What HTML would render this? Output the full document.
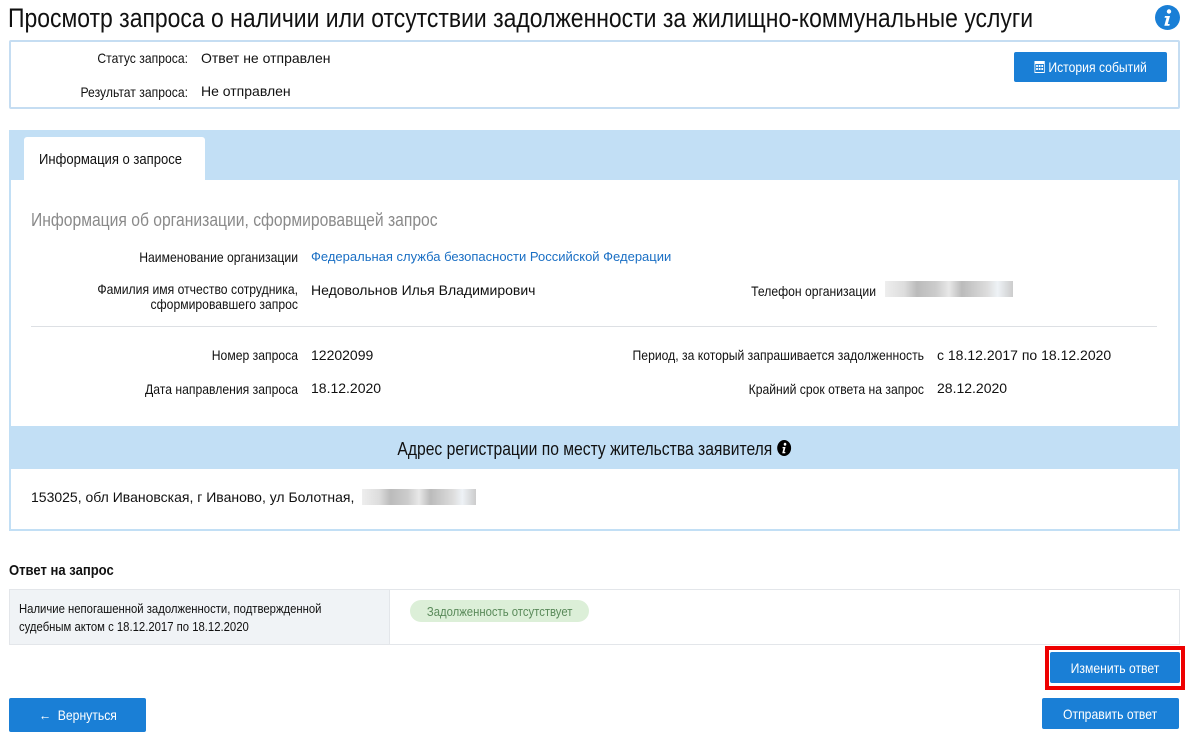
<!DOCTYPE html>
<html><head><meta charset="utf-8"><style>
*{margin:0;padding:0;box-sizing:border-box}
body{width:1191px;height:743px;background:#fff;position:relative;overflow:hidden;font-family:"Liberation Sans",sans-serif;color:#111}
.a{position:absolute;white-space:nowrap}
.nl{transform:scaleX(.87);transform-origin:left center}
.nr{transform:scaleX(.87);transform-origin:right center}
.nc{display:inline-block;transform:scaleX(.87);transform-origin:center}
.lbl{font-size:14px;text-align:right}
.val{font-size:14px}
.btn{position:absolute;background:#1a7fd6;color:#fff;font-size:14px;display:flex;align-items:center;justify-content:center;border-radius:2px}
.blur{position:absolute;height:16px;background:linear-gradient(90deg,#eee,#ddd 15%,#bbb 25%,#ccc 40%,#e8e8e8 50%,#bbb 60%,#ccc 70%,#ddd 80%,#eef2f6 88%,#ccc)}
</style></head><body>
<div class="a" style="left:8px;top:3px;font-size:27px;color:#111;transform:scaleX(.85);transform-origin:left center">Просмотр запроса о наличии или отсутствии задолженности за жилищно-коммунальные услуги</div>
<svg class="a" style="left:1155px;top:5px" width="25" height="25" viewBox="0 0 25 25"><circle cx="12.5" cy="12.5" r="12.5" fill="#1a7fd6"/><circle cx="14" cy="6.5" r="2.2" fill="#fff"/><path d="M10 11h5l-2.2 8h2l-.5 1.8H9.3l2.2-8H9.5z" fill="#fff"/></svg>

<div class="a" style="left:9px;top:40px;width:1171px;height:69px;border:2px solid #c5ddf2;border-radius:2px"></div>
<div class="a lbl nr" style="left:40px;width:148px;top:50px">Статус запроса:</div>
<div class="a val" style="left:201px;top:50px">Ответ не отправлен</div>
<div class="a lbl nr" style="left:40px;width:148px;top:84px">Результат запроса:</div>
<div class="a val" style="left:201px;top:83px">Не отправлен</div>
<div class="btn" style="left:1014px;top:52px;width:153px;height:30px"><span class="nc" style="white-space:nowrap"><svg width="12" height="13" viewBox="0 0 12 13" style="margin-right:4px;vertical-align:-1px"><rect x="0" y="1" width="12" height="12" fill="#fff"/><rect x="1" y="4" width="10" height="8" fill="#1a7fd6"/><g fill="#fff"><rect x="2" y="5" width="2" height="2"/><rect x="5" y="5" width="2" height="2"/><rect x="8" y="5" width="2" height="2"/><rect x="2" y="8" width="2" height="2"/><rect x="5" y="8" width="2" height="2"/><rect x="8" y="8" width="2" height="2"/></g></svg>История событий</span></div>

<div class="a" style="left:9px;top:130px;width:1171px;height:401px;border:2px solid #c2dff5;border-top:none"></div>
<div class="a" style="left:9px;top:130px;width:1171px;height:50px;background:#c2dff5"></div>
<div class="a" style="left:24px;top:137px;width:181px;height:44px;background:#fff;border-radius:3px 3px 0 0"></div>
<div class="a nl" style="left:39px;top:151px;font-size:15px">Информация о запросе</div>

<div class="a nl" style="left:31px;top:210px;font-size:18px;color:#8a8a8a">Информация об организации, сформировавщей запрос</div>
<div class="a lbl nr" style="left:40px;width:258px;top:249px">Наименование организации</div>
<div class="a" style="left:311px;top:249px;font-size:13px;color:#1a6fc4">Федеральная служба безопасности Российской Федерации</div>
<div class="a lbl nr" style="left:40px;width:258px;top:282px;line-height:15px">Фамилия имя отчество сотрудника,<br>сформировавшего запрос</div>
<div class="a val" style="left:311px;top:282px">Недовольнов Илья Владимирович</div>
<div class="a lbl nr" style="left:600px;width:276px;top:283px">Телефон организации</div>
<div class="blur" style="left:885px;top:281px;width:128px"></div>
<div class="a" style="left:31px;top:326px;width:1126px;height:1px;background:#dde0e4"></div>
<div class="a lbl nr" style="left:40px;width:258px;top:347px">Номер запроса</div>
<div class="a val" style="left:311px;top:347px">12202099</div>
<div class="a lbl nr" style="left:40px;width:258px;top:381px">Дата направления запроса</div>
<div class="a val" style="left:311px;top:380px">18.12.2020</div>
<div class="a lbl nr" style="left:500px;width:424px;top:347px">Период, за который запрашивается задолженность</div>
<div class="a val" style="left:937px;top:347px">с 18.12.2017 по 18.12.2020</div>
<div class="a lbl nr" style="left:500px;width:424px;top:381px">Крайний срок ответа на запрос</div>
<div class="a val" style="left:937px;top:380px">28.12.2020</div>

<div class="a" style="left:9px;top:426px;width:1171px;height:43px;background:#c2dff5"></div>
<div class="a" style="left:9px;width:1171px;top:439px;font-size:18px;text-align:center"><span class="nc">Адрес регистрации по месту жительства заявителя <svg width="17" height="16" viewBox="0 0 16 16" style="vertical-align:-1px"><circle cx="8" cy="8" r="8" fill="#000"/><circle cx="9" cy="4.3" r="1.5" fill="#fff"/><path d="M6.3 7h3.3l-1.4 5h1.3l-.3 1.2H5.8l1.4-5H6z" fill="#fff"/></svg></span></div>
<div class="a val" style="left:31px;top:489px">153025, обл Ивановская, г Иваново, ул Болотная,</div>
<div class="blur" style="left:362px;top:489px;width:114px"></div>

<div class="a nl" style="left:9px;top:562px;font-size:15px;font-weight:bold">Ответ на запрос</div>
<div class="a" style="left:9px;top:589px;width:1171px;height:56px;border:1px solid #e3e6ea"></div>
<div class="a" style="left:10px;top:590px;width:380px;height:54px;background:#f0f3f6;border-right:1px solid #e3e6ea"></div>
<div class="a nl" style="left:19px;top:600px;font-size:13px;line-height:18px">Наличие непогашенной задолженности, подтвержденной<br>судебным актом с 18.12.2017 по 18.12.2020</div>
<div class="a" style="left:410px;top:600px;width:179px;height:22px;background:#dcefd8;border-radius:11px;color:#5a8a5a;font-size:13px;display:flex;align-items:center;justify-content:center"><span class="nc">Задолженность отсутствует</span></div>

<div class="a" style="left:1045px;top:646px;width:140px;height:44px;border:4px solid #ee0000"></div>
<div class="btn" style="left:1050px;top:652px;width:130px;height:31px"><span class="nc">Изменить ответ</span></div>
<div class="btn" style="left:9px;top:698px;width:137px;height:34px"><span class="nc">←&nbsp; Вернуться</span></div>
<div class="btn" style="left:1042px;top:698px;width:137px;height:31px"><span class="nc">Отправить ответ</span></div>
</body></html>
